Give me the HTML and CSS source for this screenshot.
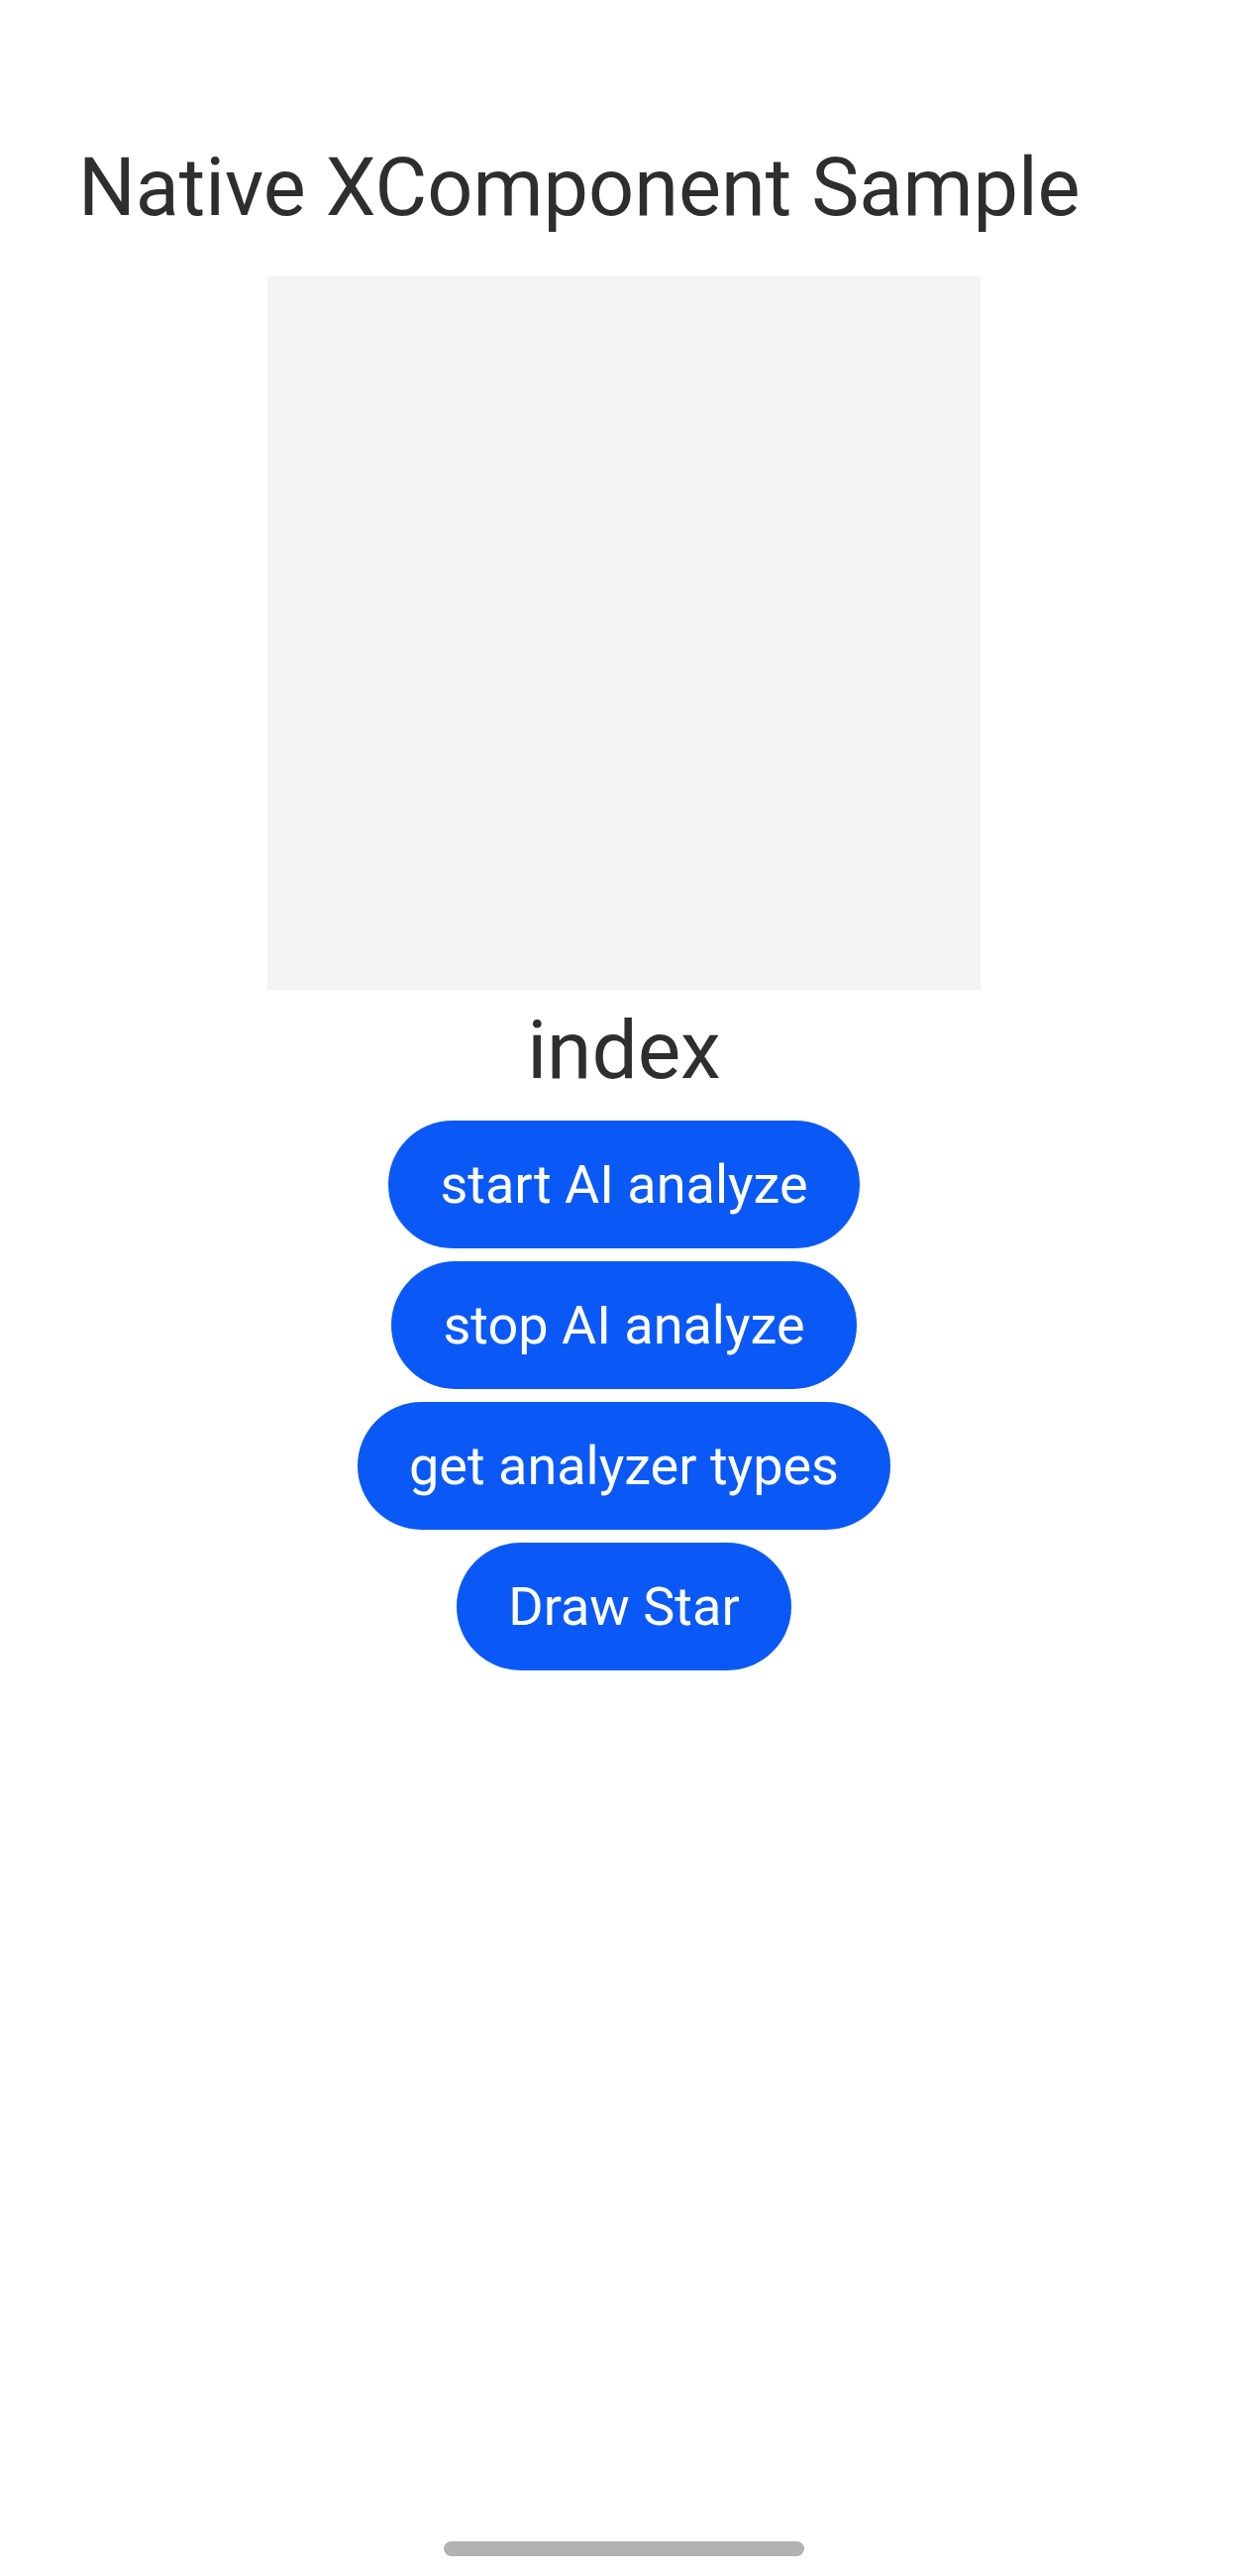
FILE: index.html
```html
<!DOCTYPE html>
<html lang="en">
<head>
<meta charset="utf-8">
<title>Native XComponent Sample</title>
<link rel="stylesheet" href="styles.css">
</head>
<body>
<div class="page">
  <h1 class="title">Native XComponent Sample</h1>
  <div class="canvas"></div>
  <div class="label">index</div>
  <div class="buttons">
    <button class="btn">start AI analyze</button>
    <button class="btn">stop AI analyze</button>
    <button class="btn">get analyzer types</button>
    <button class="btn">Draw Star</button>
  </div>
  <div class="spacer"></div>
  <div class="home-bar-wrap"><div class="home-bar"></div></div>
</div>
</body>
</html>
```
FILE: styles.css
```css
html, body {
  margin: 0;
  padding: 0;
  background: #ffffff;
}
.page {
  width: 1260px;
  height: 2600px;
  display: flex;
  flex-direction: column;
  font-family: Roboto, "Noto Sans", sans-serif;
  color: #2e2e2e;
}
.title {
  margin: 143px 0 0 0;
  padding-left: 79px;
  font-size: 81px;
  line-height: 94px;
  font-weight: 400;
}
.canvas {
  width: 720px;
  height: 720px;
  margin: 42px auto 0;
  background: #f3f3f3;
}
.label {
  margin-top: 13px;
  text-align: center;
  font-size: 82px;
  line-height: 96px;
}
.buttons {
  margin-top: 23px;
  display: flex;
  flex-direction: column;
  align-items: center;
  gap: 13px;
}
.btn {
  height: 129px;
  padding: 0 52px;
  border: none;
  border-radius: 65px;
  background: #0a59f7;
  color: #ffffff;
  font-family: Roboto, "Noto Sans", sans-serif;
  font-size: 54px;
  line-height: 129px;
}
.spacer {
  flex: 1;
}
.home-bar-wrap {
  display: flex;
  justify-content: center;
  padding-bottom: 20px;
}
.home-bar {
  width: 364px;
  height: 15px;
  border-radius: 8px;
  background: #b2b2b2;
}
```
